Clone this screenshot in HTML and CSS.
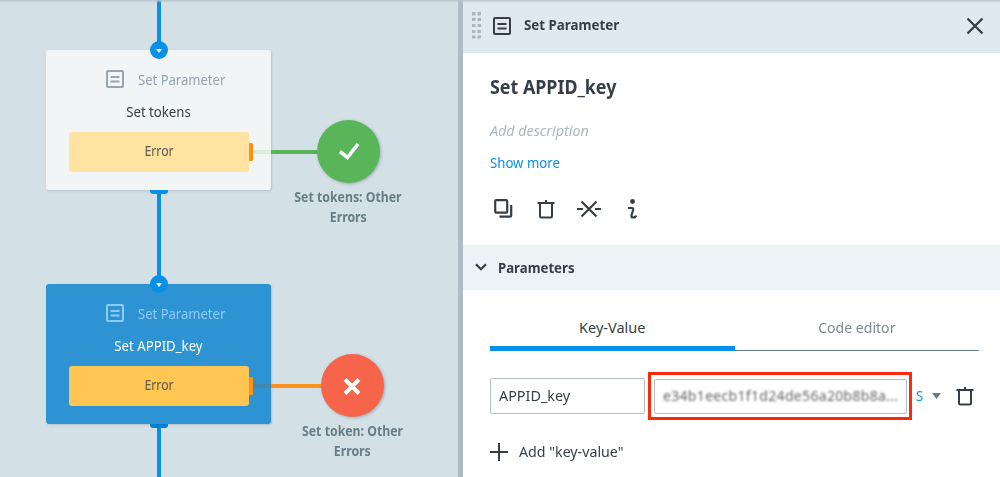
FILE: index.html
```html
<!DOCTYPE html>
<html lang="en">
<head>
<meta charset="utf-8">
<title>Set Parameter</title>
<link rel="stylesheet" href="styles.css">
</head>
<body>
<svg class="defs" width="0" height="0">
  <symbol id="param" viewBox="0 0 18 18"><rect x="1" y="1" width="16" height="16" rx="1" fill="none" stroke="currentColor" stroke-width="2"/><path d="M4.500 7h9M4.500 11.500h9" stroke="currentColor" stroke-width="2"/></symbol>
  <symbol id="trash" viewBox="0 0 18 20"><path d="M.5 4h17M9 1v3M3 4v13q0 1.500 1.500 1.500h9q1.500 0 1.500-1.500V4" fill="none" stroke="currentColor" stroke-width="2"/></symbol>
</svg>
<div class="app">
  <main class="canvas">
    <div class="flow-line"></div>
    <div class="edge edge-ok"></div>
    <div class="edge edge-fail"></div>

    <section class="node node-tokens">
      <div class="node-type"><svg class="param-icon"><use href="#param"/></svg><span class="t type-text">Set Parameter</span></div>
      <div class="node-title"><span class="t">Set tokens</span></div>
      <div class="node-error"><span class="t">Error</span></div>
      <i class="port-in"></i><i class="port-out"></i><i class="port-error"></i>
    </section>

    <section class="node node-key">
      <div class="node-type"><svg class="param-icon"><use href="#param"/></svg><span class="t type-text">Set Parameter</span></div>
      <div class="node-title"><span class="t">Set APPID_key</span></div>
      <div class="node-error"><span class="t">Error</span></div>
      <i class="port-in"></i><i class="port-out"></i><i class="port-error"></i>
    </section>

    <div class="end end-ok">
      <div class="disc"><svg width="63" height="63"><path d="M23 31.500l7.500 6L41 24" fill="none" stroke="#fff" stroke-width="3.600"/></svg></div>
      <div class="end-label"><span class="t">Set tokens: Other</span><span class="t">Errors</span></div>
    </div>
    <div class="end end-fail">
      <div class="disc"><svg width="63" height="63"><path d="M24 25.500L38 39.500M38 25.500L24 39.500" fill="none" stroke="#fff" stroke-width="4"/></svg></div>
      <div class="end-label"><span class="t">Set token: Other</span><span class="t">Errors</span></div>
    </div>
  </main>

  <aside class="panel">
    <header class="panel-head">
      <svg class="grip" width="9" height="27" fill="#a8b7bc"><path d="M0 0h3.500v3.500H0zM5.500 0h3.500v3.500H5.500zM0 6h3.500v3H0zM5.500 6h3.500v3H5.500zM0 12h3.500v3H0zM5.500 12h3.500v3H5.500zM0 18h3.500v3H0zM5.500 18h3.500v3H5.500zM0 23.500h3.500v3H0zM5.500 23.500h3.500v3H5.500z"/></svg>
      <svg class="param-icon"><use href="#param"/></svg>
      <span class="t head-text">Set Parameter</span>
      <svg class="close" width="18" height="18"><path d="M1.500 1.500l15 15M16.500 1.500l-15 15" stroke="currentColor" stroke-width="2.300"/></svg>
    </header>
    <div class="summary">
      <h1 class="t summary-title">Set APPID_key</h1>
      <div class="t summary-desc">Add description</div>
      <div class="t summary-more">Show more</div>
      <div class="tools">
        <svg width="20" height="20"><g fill="none" stroke="currentColor" stroke-width="2.200"><rect x="1.200" y="1.200" width="12" height="12.500" rx="1"/><path d="M17.200 6v10.500q0 1.200-1.200 1.200H5.500"/></g></svg>
        <svg class="tool-trash" width="18" height="20"><use href="#trash"/></svg>
        <svg class="tool-cut" width="26" height="20"><path d="M1 10h6M19 10h6M5.500 2.500l15 15M20.500 2.500l-15 15" stroke="currentColor" stroke-width="2.200"/></svg>
        <svg class="tool-info" width="12" height="20"><circle cx="6.500" cy="2.500" r="2.400" fill="currentColor"/><path d="M2 9h4q1.500 0 1.200 1.500L5.500 16.500q-.5 2 1.500 2 2.700 0 3-2" fill="none" stroke="currentColor" stroke-width="2.200"/></svg>
      </div>
    </div>
    <div class="section-head">
      <svg width="12" height="8"><path d="M1 1.200l5 5 5-5" fill="none" stroke="currentColor" stroke-width="2.200"/></svg>
      <span class="t section-text">Parameters</span>
    </div>
    <div class="params">
      <div class="tabs">
        <div class="tab tab-on"><span class="t tab-a">Key-Value</span></div>
        <div class="tab"><span class="t tab-b">Code editor</span></div>
      </div>
      <div class="row">
        <div class="field field-key"><span class="t key-text">APPID_key</span></div>
        <div class="marked"><div class="field field-value"><span class="secret">e34b1eecb1f1d24de56a20b8b8a...</span></div></div>
        <span class="t kind">S</span>
        <svg class="caret" width="9" height="6"><path d="M0 0h9L4.500 6z" fill="#647c88"/></svg>
        <svg class="row-trash" width="18" height="20"><use href="#trash"/></svg>
      </div>
      <div class="add">
        <svg width="18" height="18"><path d="M0 9h18M9 0v18" stroke="currentColor" stroke-width="2"/></svg>
        <span class="t add-text">Add "key-value"</span>
      </div>
    </div>
  </aside>
  <div class="top-shade"></div>
</div>
</body>
</html>
```
FILE: styles.css
```css
* { box-sizing: border-box; }
body { margin: 0; font: 14.5px/20px "Noto Sans", "Open Sans", sans-serif; color: #353e47; background: #fff; }
.defs { position: absolute; }
.app { position: relative; display: flex; width: 1000px; height: 477px; overflow: hidden; }
svg { display: block; flex: none; overflow: visible; }
.t { display: inline-block; white-space: nowrap; transform: scaleX(.91); }
.param-icon { width: 18px; height: 18px; }
.top-shade { position: absolute; inset: 0 0 auto; height: 3px; background: linear-gradient(#b9c5ca, #b9c5ca00); }

/* flow diagram */
.canvas { position: relative; width: 458px; flex: none; background: #d3e0e5; }
.flow-line { position: absolute; left: 157px; top: 0; width: 3.500px; height: 477px; background: #0790e8; }
.edge { position: absolute; left: 249px; width: 75px; height: 4px; }
.edge-ok { top: 150px; background: #57b557; }
.edge-fail { top: 384px; background: #ff9119; }
.node { position: absolute; left: 46px; width: 225px; height: 140px; padding: 20px 23px 0; border-radius: 3px; box-shadow: 1px 1px 2px #8c9ba670; }
.node-tokens { top: 50px; background: #f1f5f6; }
.node-key { top: 284px; background: #2e93d2; }
.node::after { content: ""; position: absolute; left: 207px; top: 100px; width: 18px; height: 4px; background: #dcecdb; }
.node-key::after { background: #4486ad; }
.node-type { display: flex; height: 18px; align-items: center; padding-left: 37px; color: #95a5b2; }
.node-key .node-type { color: #8ecbf7; }
.type-text { margin-left: 14px; transform-origin: left; transform: scaleX(.9); }
.node-title { margin-top: 13px; text-align: center; height: 20px; }
.node-key .node-title { color: #fff; }
.node-error { margin-top: 11px; height: 40px; width: 180px; padding-bottom: 2px; border-radius: 3px; display: flex; align-items: center; justify-content: center; font-size: 13.500px; color: #5d5a51; background: #ffe3a1; }
.node-key .node-error { background: #ffc653; }
.port-in { position: absolute; left: 104px; top: -9px; width: 18px; height: 18px; border-radius: 50%; background: #0790e8; }
.port-in::after { content: ""; position: absolute; left: 5.500px; top: 8px; border: 3.500px solid transparent; border-top: 4.500px solid #fff; border-bottom: 0; }
.port-out { position: absolute; left: 104px; top: 140px; width: 18px; height: 4px; border-radius: 0 0 3px 3px; background: #0790e8; }
.node-key .port-out { background: #0480d1; }
.port-error { position: absolute; left: 203px; top: 93px; width: 4px; height: 18px; border-radius: 0 1px 1px 0; background: #ff9119; }
.end { position: absolute; width: 140px; display: flex; flex-direction: column; align-items: center; }
.end-ok { left: 278px; top: 120px; }
.end-fail { left: 282.500px; top: 354px; }
.disc { width: 63px; height: 63px; border-radius: 50%; background: #58b558; box-shadow: 1px 1px 3px #68788480; }
.end-fail .disc { background: #f66449; }
.end-label { display: flex; flex-direction: column; align-items: center; margin-top: 4px; font-size: 13.500px; font-weight: 700; color: #687d87; }

/* side panel */
.panel { flex: 1; border-left: 5px solid #aebdc5; background: #fff; }
.panel .t { transform-origin: left; }
.panel-head { height: 53px; display: flex; align-items: center; padding: 0 16px 2px 9px; background: #dfeaf0; }
.panel-head .param-icon { margin-left: 12px; }
.panel-head .head-text { margin: 0 0 3px 13px; font-weight: 700; transform: scaleX(.92); }
.close { margin-left: auto; }
.summary { height: 192px; padding: 22px 27px 0; display: flex; flex-direction: column; align-items: flex-start; }
.summary-title { margin: 0; font-size: 19px; line-height: 24px; transform: scaleX(.94); }
.summary-desc { margin-top: 21px; font-style: italic; color: #a9b8bf; transform: scaleX(.985); }
.summary-more { margin-top: 12px; color: #0790e8; }
.tools { display: flex; margin: 27px 0 0 4px; }
.tool-trash { margin-left: 23px; }
.tool-cut { margin-left: 21px; }
.tool-info { margin-left: 24px; }
.section-head { height: 45px; display: flex; align-items: center; padding: 0 0 2px 12px; background: #ebf3f6; }
.section-text { margin-left: 11px; font-weight: 700; }
.params { padding: 15px 20px 0 27px; }
.tabs { display: flex; width: 489px; height: 46px; }
.tab { flex: 1; padding-top: 12px; text-align: center; border-bottom: 1px solid #657b88; color: #7d8a90; }
.tab-on { border-bottom: 5px solid #0790e8; color: #353e47; }
.tabs .t { transform-origin: center; }
.tab-a { transform: scaleX(1); }
.tab-b { transform: scaleX(.97); }
.row { display: flex; align-items: center; margin-top: 21px; height: 48px; }
.field { display: flex; align-items: center; height: 36px; border: 1px solid #b4c0c6; border-radius: 2px; background: #fff; padding: 0 0 2px 8px; }
.field-key { width: 155px; }
.key-text { transform: scaleX(.99); }
.marked { width: 264px; height: 48px; margin-left: 3px; padding: 4px 3px; border: 3px solid #fa2a0c; }
.field-value { width: 253px; height: 35px; }
.secret { font-size: 14px; letter-spacing: .32px; color: #666; filter: blur(1.100px); white-space: nowrap; }
.kind { margin: 0 0 3px 4px; color: #0790e8; }
.caret { margin-left: 8px; }
.row-trash { margin-left: 15px; }
.add { display: flex; align-items: center; margin-top: 21px; }
.add-text { margin: 0 0 2px 11px; transform: scaleX(.98); }
```
